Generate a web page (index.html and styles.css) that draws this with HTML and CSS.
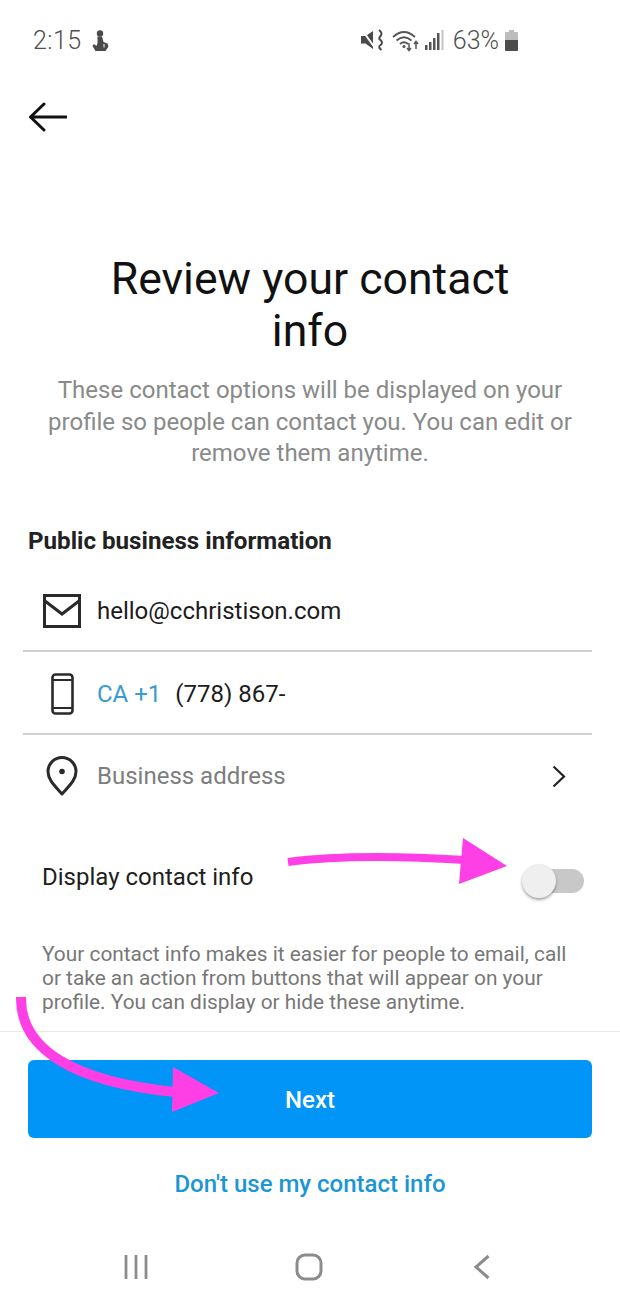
FILE: index.html
```html
<!DOCTYPE html>
<html lang="en">
<head>
<meta charset="utf-8">
<title>Review your contact info</title>
<link rel="stylesheet" href="styles.css">
</head>
<body>
<div class="screen">
  <header class="status">
    <div class="status-left">
      <span class="time">2:15</span>
      <svg class="ic-notif" viewBox="0 0 17 21"><circle cx="8" cy="3.500" r="3.200" fill="#4a4a4a"/><path d="M5.500 6.500h4.500l1.500 5.500 4 1.500 1 3-3 4.500H3.500L.5 16l1.500-2 2.500 2 1-3z" fill="#4a4a4a"/><path d="M12 14v3.500" stroke="#fff" stroke-width="1"/></svg>
    </div>
    <div class="status-right">
      <svg class="ic-mute" viewBox="0 0 23 22"><path d="M0 7h4.500L12 2v18l-7.500-5.500H0z" fill="#4a4a4a"/><path d="M1.500 1.500 14 19" stroke="#fff" stroke-width="2"/><path d="M18 1q4 3 1.500 6t0 4q3 3 0 5t1 5" fill="none" stroke="#4a4a4a" stroke-width="2"/></svg>
      <svg class="ic-wifi" viewBox="0 0 28 23"><g fill="none" stroke="#555" stroke-width="1.800"><path d="M1 8q11-10 22 0"/><path d="M4.500 11.500q7.500-6.500 15 0"/><path d="M8 15q4-3.500 8 0"/></g><circle cx="12" cy="17.500" r="1.500" fill="#555"/><path d="M17 14v7M15 19l2 2.500 2-2.500M24 20v-7.500M22 15l2-2.500 2 2.500" fill="none" stroke="#555" stroke-width="1.500"/></svg>
      <svg class="ic-signal" viewBox="0 0 19 22"><rect x="0" y="16" width="2.500" height="5" fill="#555"/><rect x="4" y="13" width="2.500" height="8" fill="#555"/><rect x="8" y="9" width="2.500" height="12" fill="#555"/><rect x="12" y="4" width="2.500" height="17" fill="#555"/><rect x="16.500" y="1" width="2" height="20" fill="#c4c4c4"/></svg>
      <span class="battery-text">63%</span>
      <svg class="ic-battery" viewBox="0 0 13 21"><path d="M4 0h5v2h3a1 1 0 0 1 1 1v7H0V3a1 1 0 0 1 1-1h3z" fill="#bcbcbc"/><path d="M0 10h13v10a1 1 0 0 1-1 1H1a1 1 0 0 1-1-1z" fill="#4c4c4c"/></svg>
    </div>
  </header>

  <nav class="topbar">
    <svg class="ic-back" viewBox="0 0 38 30"><path d="M1.500 15H37M15 2 1.500 15 15 28" fill="none" stroke="#111" stroke-width="3" stroke-linecap="round" stroke-linejoin="round"/></svg>
  </nav>

  <main class="content">
    <h1 class="title">Review your contact<br>info</h1>
    <p class="lead">These contact options will be displayed on your profile so people can contact you. You can edit or remove them anytime.</p>

    <h2 class="section">Public business information</h2>

    <div class="row row-line">
      <span class="row-icon">
        <svg class="ic-mail" viewBox="0 0 38 34"><rect x="1.500" y="1.500" width="35" height="31" fill="none" stroke="#2a2a2a" stroke-width="3"/><path d="M2 7 19 20 36 7" fill="none" stroke="#2a2a2a" stroke-width="3"/></svg>
      </span>
      <span class="value">hello@cchristison.com</span>
    </div>
    <div class="row row-line">
      <span class="row-icon">
        <svg class="ic-phone" viewBox="0 0 23 42"><rect x="1.500" y="1.500" width="20" height="39" rx="3" fill="none" stroke="#2a2a2a" stroke-width="2.600"/><path d="M2 7h19M2 35h19" stroke="#2a2a2a" stroke-width="2"/></svg>
      </span>
      <span class="code">CA +1</span>
      <span class="value">(778) 867-</span>
    </div>
    <div class="row">
      <span class="row-icon">
        <svg class="ic-pin" viewBox="0 0 32 40"><path d="M16 38C9 30 2 24 2 15.500a14 14 0 0 1 28 0C30 24 23 30 16 38z" fill="none" stroke="#2a2a2a" stroke-width="3" stroke-linejoin="round"/><circle cx="16" cy="15.500" r="2.800" fill="#2a2a2a"/></svg>
      </span>
      <span class="placeholder">Business address</span>
      <svg class="ic-chevron" viewBox="0 0 14 23"><path d="M1.500 1.500 12 11.500 1.500 21.500" fill="none" stroke="#222" stroke-width="2.200"/></svg>
    </div>

    <div class="toggle-row">
      <span class="toggle-label">Display contact info</span>
      <span class="switch"><span class="knob"></span></span>
    </div>

    <p class="note">Your contact info makes it easier for people to email, call or take an action from buttons that will appear on your profile. You can display or hide these anytime.</p>
  </main>

  <footer class="actions">
    <button class="btn-next">Next</button>
    <a class="link" href="#">Don't use my contact info</a>
  </footer>

  <div class="navbar">
    <svg class="ic-recent" viewBox="0 0 26 26"><path d="M3 1v24M13 1v24M23 1v24" stroke="#8c8c8c" stroke-width="2.800"/></svg>
    <svg class="ic-home" viewBox="0 0 28 28"><rect x="2" y="2" width="24" height="24" rx="8" fill="none" stroke="#8c8c8c" stroke-width="3"/></svg>
    <svg class="ic-return" viewBox="0 0 18 26"><path d="M15.500 2 3 13l12.500 11" fill="none" stroke="#8c8c8c" stroke-width="3"/></svg>
  </div>

  <svg class="annotation" viewBox="0 0 620 1309">
    <path d="M288 862C340 855 400 856 465 860" fill="none" stroke="#ff3fe6" stroke-width="8"/>
    <path d="M463 838 507 866 459 884z" fill="#ff3fe6"/>
    <path d="M21 997C20 1050 75 1082 175 1092" fill="none" stroke="#ff3fe6" stroke-width="10"/>
    <path d="M173 1067 219 1093 172 1112z" fill="#ff3fe6"/>
  </svg>
</div>
</body>
</html>
```
FILE: styles.css
```css
* { box-sizing: border-box; }
html, body { margin: 0; padding: 0; background: #fff; }
body { font-family: Roboto, "Liberation Sans", sans-serif; }
.screen { position: relative; width: 620px; height: 1309px; overflow: hidden; display: flex; flex-direction: column; }

.status { height: 80px; padding: 26px 102px 0 33px; display: flex; justify-content: space-between; align-items: flex-start; color: #4f4f4f; }
.status-left, .status-right { display: flex; align-items: center; height: 28px; }
.time { font-size: 25px; font-weight: 300; letter-spacing: .4px; }
.ic-notif { width: 17px; height: 21px; margin-left: 11px; }
.ic-mute { width: 23px; height: 22px; }
.ic-wifi { width: 28px; height: 23px; margin-left: 8px; }
.ic-signal { width: 19px; height: 22px; margin-left: 5px; }
.battery-text { font-size: 25px; font-weight: 300; margin-left: 9px; }
.ic-battery { width: 13px; height: 21px; margin-left: 6px; }

.topbar { height: 74px; padding: 22px 0 0 29px; }
.ic-back { display: block; width: 38px; height: 30px; }

.content { padding: 0 28px; }
.title { margin: 99px 0 0; padding: 0; text-align: center; font-size: 44.600px; line-height: 52px; font-weight: 400; color: #111; }
.lead { margin: 18px 0 0; text-align: center; font-size: 24px; line-height: 31.500px; color: #8a8a8a; }
.section { margin: 55px 0 12px; font-size: 24.150px; line-height: 32px; font-weight: 700; color: #222; }

.row { height: 83px; display: flex; align-items: center; padding-left: 18px; margin-left: -5px; }
.row-line { border-bottom: 2px solid #d0d0d0; padding-top: 3px; }
.row-icon { width: 42px; height: 44px; margin-right: 14px; display: flex; align-items: center; justify-content: center; flex: none; }
.ic-mail { width: 38px; height: 34px; flex: none; }
.ic-phone { width: 23px; height: 42px; flex: none; }
.ic-pin { width: 32px; height: 40px; flex: none; }
.value { font-size: 24px; color: #1c1c1c; }
.code { font-size: 24px; color: #3a9bd0; margin-right: 14px; }
.placeholder { font-size: 24px; color: #7d7d7d; flex: 1; }
.ic-chevron { width: 14px; height: 23px; margin-right: 26px; }

.toggle-row { display: flex; align-items: center; justify-content: space-between; height: 40px; margin-top: 39px; padding: 0 8px 0 14px; }
.toggle-label { font-size: 24px; color: #1e1e1e; }
.switch { position: relative; width: 62px; height: 24px; margin-top: 8px; border-radius: 12px; background: #c8c8c8; }
.knob { position: absolute; left: 0; top: -5px; width: 34px; height: 34px; border-radius: 50%; background: #efefef; box-shadow: 0 2px 3px rgba(0,0,0,.35); }

.note { margin: 45.500px 0 0; padding: 0 14px; font-size: 20.850px; line-height: 24px; color: #777; }

.actions { margin-top: 17px; padding: 28px 28px 0; border-top: 1px solid #e8e8e8; display: flex; flex-direction: column; align-items: center; }
.btn-next { width: 564px; height: 78px; padding-top: 3px; background: #0095f6; color: #fff; border: 0; border-radius: 6px; font: 500 24px Roboto, sans-serif; }
.link { margin-top: 30px; font-size: 24px; line-height: 32px; font-weight: 500; color: #1a96d6; text-decoration: none; }

.navbar { margin-top: 52px; padding: 0 129px 0 123px; display: flex; justify-content: space-between; align-items: center; height: 30px; }
.ic-recent { width: 26px; height: 26px; }
.ic-home { width: 28px; height: 28px; margin-right: 4px; }
.ic-return { width: 18px; height: 26px; }

.annotation { position: absolute; left: 0; top: 0; width: 620px; height: 1309px; pointer-events: none; }
```
